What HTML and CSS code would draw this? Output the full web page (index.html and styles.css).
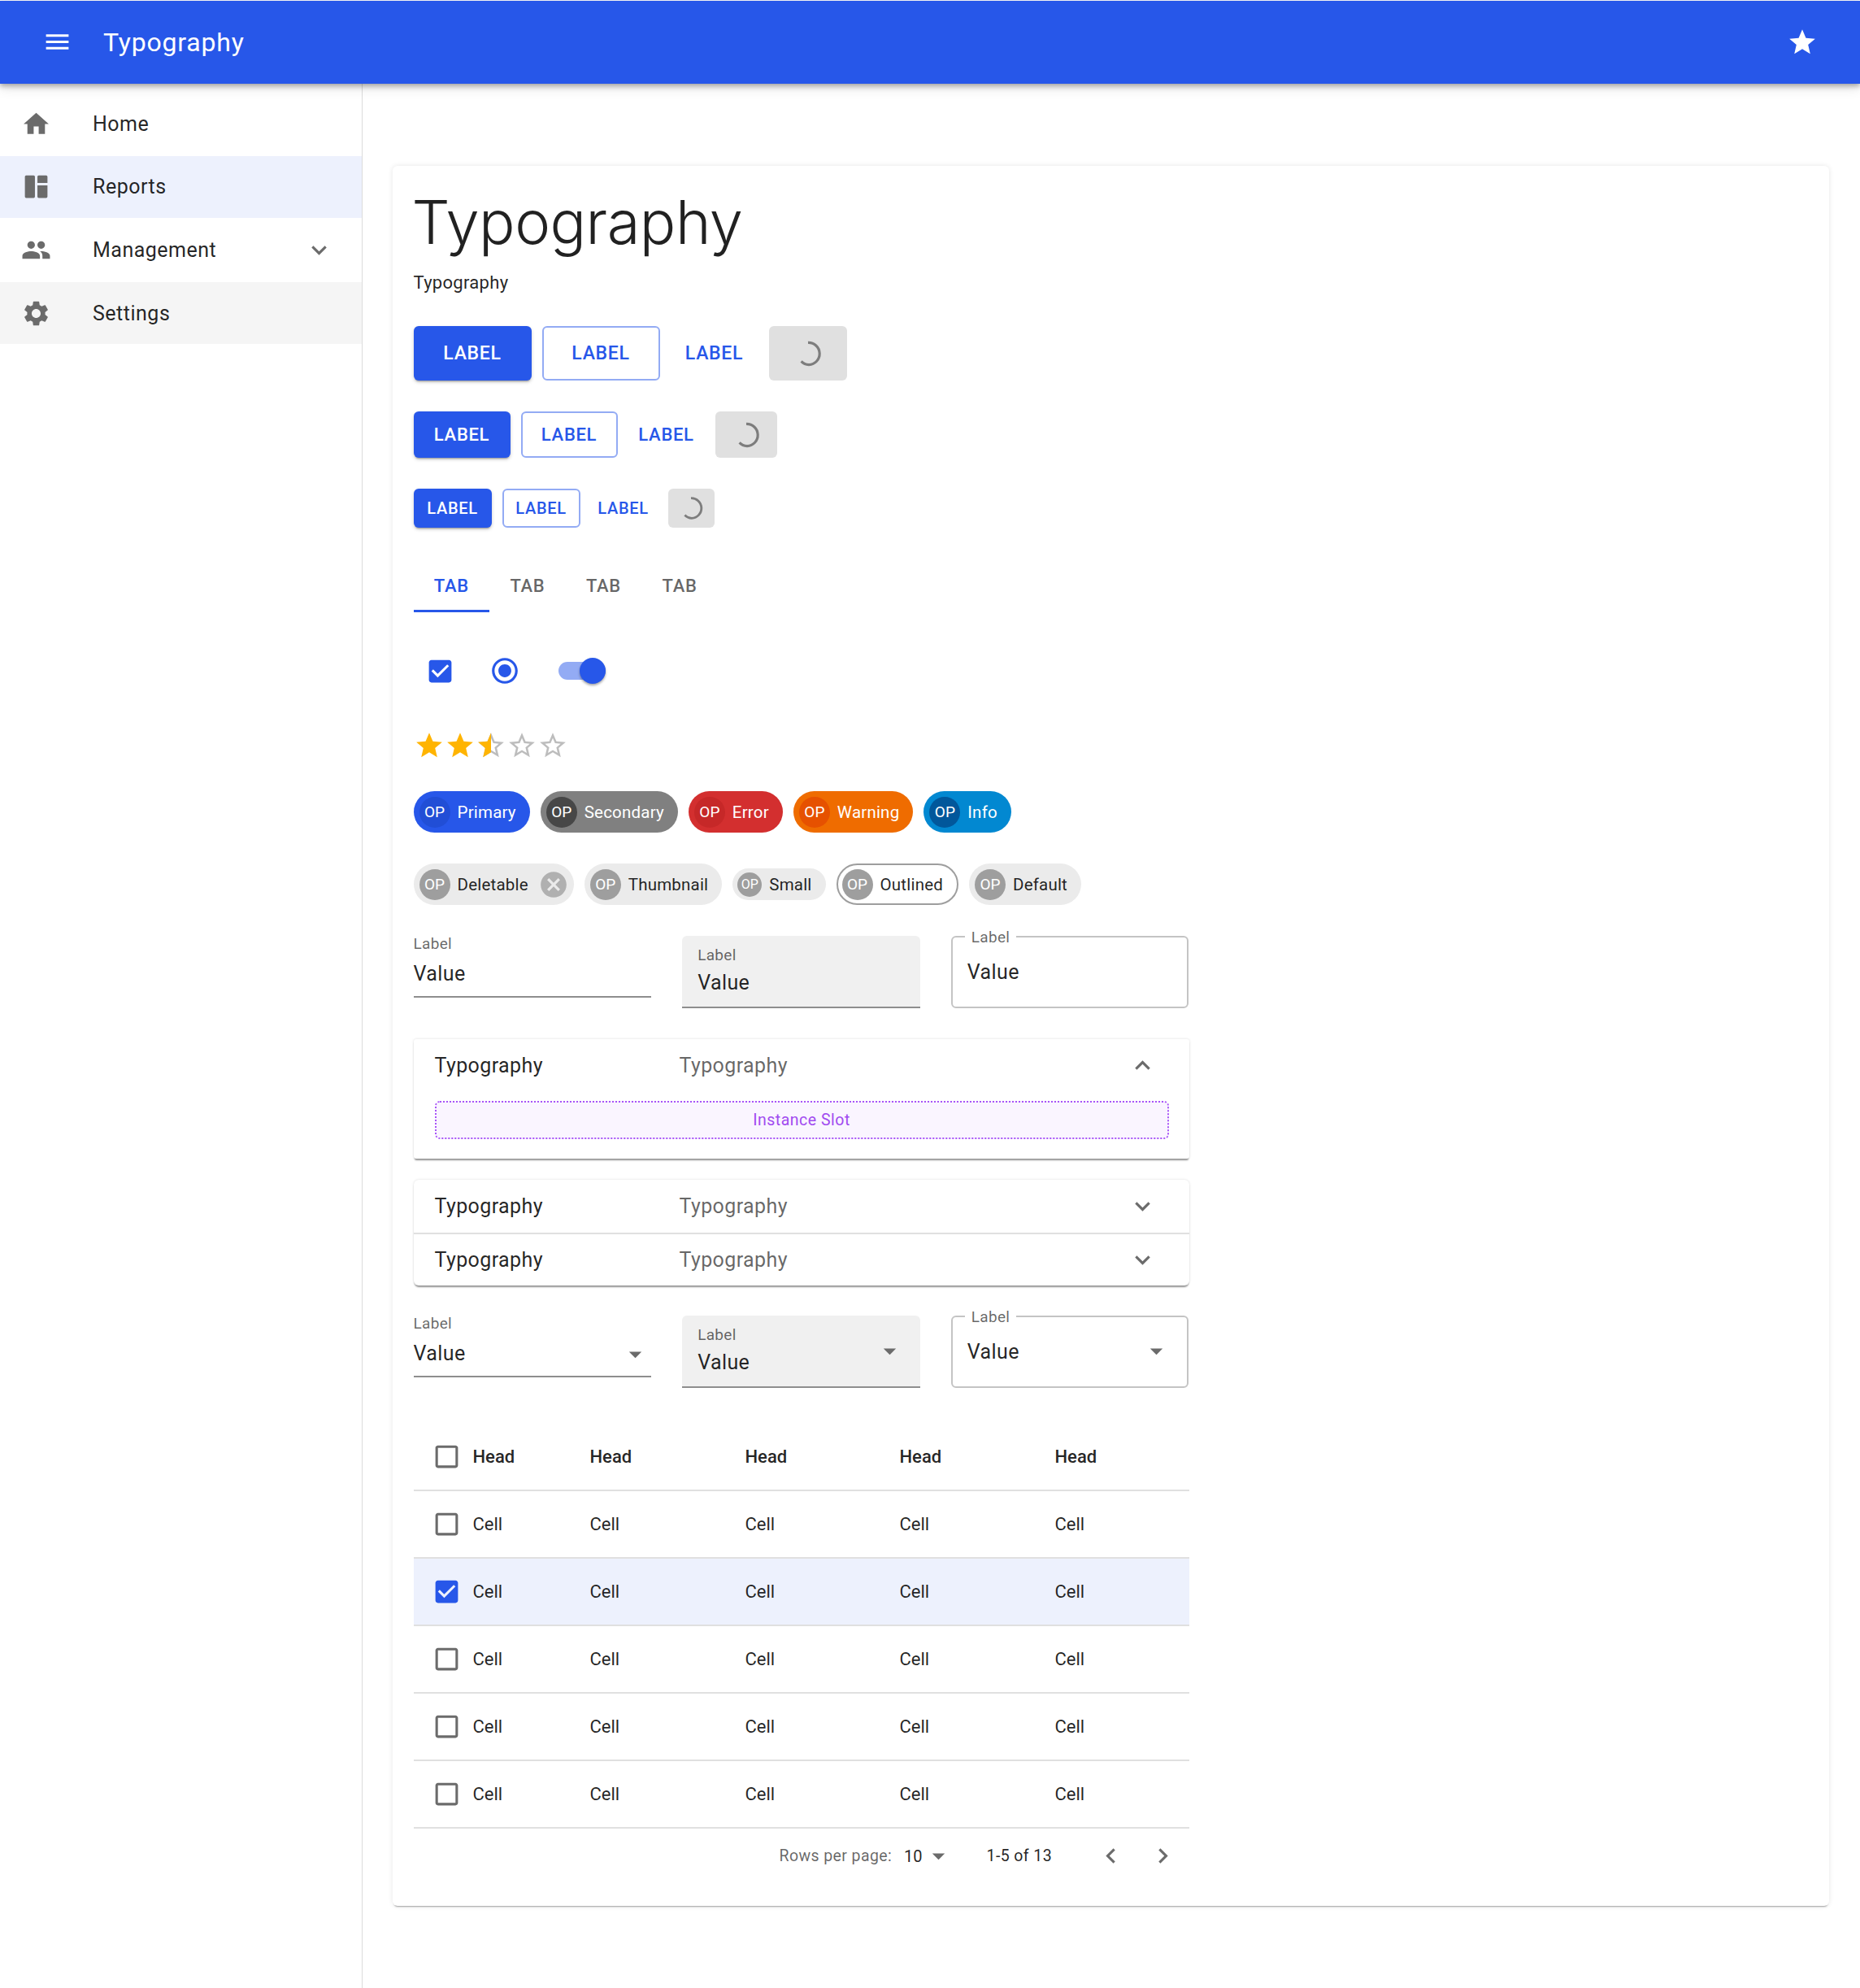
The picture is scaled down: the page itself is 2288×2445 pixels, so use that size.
FILE: index.html
```html
<!DOCTYPE html>
<html lang="en">
<head>
  <meta charset="UTF-8">
  <meta name="viewport" content="width=device-width, initial-scale=1.0">
  <title>Typography</title>
  <link rel="stylesheet" href="styles.css">
</head>
<body>
  <svg class="defs" width="0" height="0">
    <symbol id="i-menu" viewBox="0 0 24 24"><path d="M3 18h18v-2H3v2zm0-5h18v-2H3v2zm0-7v2h18V6H3z"/></symbol>
    <symbol id="i-star" viewBox="0 0 24 24"><path d="M12 17.27L18.18 21l-1.64-7.03L22 9.24l-7.19-.61L12 2 9.19 8.63 2 9.24l5.46 4.73L5.82 21z"/></symbol>
    <symbol id="i-star-o" viewBox="0 0 24 24"><path d="M22 9.24l-7.19-.62L12 2 9.19 8.63 2 9.24l5.46 4.73L5.82 21 12 17.27 18.18 21l-1.63-7.03L22 9.24zM12 15.4l-3.76 2.27 1-4.28-3.32-2.88 4.38-.38L12 6.1l1.71 4.04 4.38.38-3.32 2.88 1 4.28L12 15.4z"/></symbol>
    <symbol id="i-star-half" viewBox="0 0 24 24"><path d="M12 2 9.19 8.63 2 9.24l5.46 4.73L5.82 21 12 17.27z"/></symbol>
    <symbol id="i-home" viewBox="0 0 24 24"><path d="M10 20v-6h4v6h5v-8h3L12 3 2 12h3v8z"/></symbol>
    <symbol id="i-reports" viewBox="0 0 24 24"><path d="M4 3h6a1 1 0 0 1 1 1v16a1 1 0 0 1-1 1H4a1 1 0 0 1-1-1V4a1 1 0 0 1 1-1zm10 0h6a1 1 0 0 1 1 1v5h-8V4a1 1 0 0 1 1-1zm-1 8h8v9a1 1 0 0 1-1 1h-6a1 1 0 0 1-1-1z"/></symbol>
    <symbol id="i-people" viewBox="0 0 24 24"><path d="M16 11c1.66 0 2.99-1.34 2.99-3S17.66 5 16 5c-1.66 0-3 1.34-3 3s1.34 3 3 3zm-8 0c1.66 0 2.99-1.34 2.99-3S9.66 5 8 5C6.34 5 5 6.34 5 8s1.34 3 3 3zm0 2c-2.33 0-7 1.17-7 3.5V19h14v-2.5c0-2.33-4.67-3.5-7-3.5zm8 0c-.29 0-.62.02-.97.05 1.16.84 1.97 1.97 1.97 3.45V19h6v-2.5c0-2.33-4.67-3.5-7-3.5z"/></symbol>
    <symbol id="i-gear" viewBox="0 0 24 24"><path d="M19.14 12.94c.04-.3.06-.61.06-.94 0-.32-.02-.64-.07-.94l2.03-1.58c.18-.14.23-.41.12-.61l-1.92-3.32c-.12-.22-.37-.29-.59-.22l-2.39.96c-.5-.38-1.03-.7-1.62-.94l-.36-2.54c-.04-.24-.24-.41-.48-.41h-3.84c-.24 0-.43.17-.47.41l-.36 2.54c-.59.24-1.13.57-1.62.94l-2.39-.96c-.22-.08-.47 0-.59.22L2.74 8.87c-.12.21-.08.47.12.61l2.03 1.58c-.05.3-.09.63-.09.94s.02.64.07.94l-2.03 1.58c-.18.14-.23.41-.12.61l1.92 3.32c.12.22.37.29.59.22l2.39-.96c.5.38 1.03.7 1.62.94l.36 2.54c.05.24.24.41.48.41h3.84c.24 0 .44-.17.47-.41l.36-2.54c.59-.24 1.13-.56 1.62-.94l2.39.96c.22.08.47 0 .59-.22l1.92-3.32c.12-.22.07-.47-.12-.61l-2.01-1.58zM12 15.6c-1.98 0-3.6-1.62-3.6-3.6s1.62-3.6 3.6-3.6 3.6 1.62 3.6 3.6-1.62 3.6-3.6 3.6z"/></symbol>
    <symbol id="i-more" viewBox="0 0 24 24"><path d="M16.59 8.59L12 13.17 7.41 8.59 6 10l6 6 6-6z"/></symbol>
    <symbol id="i-less" viewBox="0 0 24 24"><path d="M12 8l-6 6 1.41 1.41L12 10.83l4.59 4.58L18 14z"/></symbol>
    <symbol id="i-checked" viewBox="0 0 24 24"><path d="M19 3H5c-1.11 0-2 .9-2 2v14c0 1.1.89 2 2 2h14c1.11 0 2-.9 2-2V5c0-1.1-.89-2-2-2zm-9 14l-5-5 1.41-1.41L10 14.17l7.59-7.59L19 8l-9 9z"/></symbol>
    <symbol id="i-unchecked" viewBox="0 0 24 24"><path d="M19 5v14H5V5h14m0-2H5c-1.1 0-2 .9-2 2v14c0 1.1.9 2 2 2h14c1.1 0 2-.9 2-2V5c0-1.1-.9-2-2-2z"/></symbol>
    <symbol id="i-radio" viewBox="0 0 24 24"><path d="M12 7c-2.76 0-5 2.24-5 5s2.24 5 5 5 5-2.24 5-5-2.24-5-5-5zm0-5C6.48 2 2 6.48 2 12s4.48 10 10 10 10-4.48 10-10S17.52 2 12 2zm0 18c-4.42 0-8-3.58-8-8s3.58-8 8-8 8 3.58 8 8-3.58 8-8 8z"/></symbol>
    <symbol id="i-cancel" viewBox="0 0 24 24"><path d="M12 2C6.47 2 2 6.47 2 12s4.47 10 10 10 10-4.47 10-10S17.53 2 12 2zm5 13.59L15.59 17 12 13.41 8.41 17 7 15.59 10.59 12 7 8.41 8.41 7 12 10.59 15.59 7 17 8.41 13.41 12 17 15.59z"/></symbol>
    <symbol id="i-drop" viewBox="0 0 24 24"><path d="M7 10l5 5 5-5z"/></symbol>
    <symbol id="i-left" viewBox="0 0 24 24"><path d="M15.41 7.41L14 6l-6 6 6 6 1.41-1.41L10.83 12z"/></symbol>
    <symbol id="i-right" viewBox="0 0 24 24"><path d="M10 6L8.59 7.41 13.17 12l-4.58 4.59L10 18l6-6z"/></symbol>
    <symbol id="i-spinner" viewBox="0 0 40 40"><path d="M20 7a13 13 0 0 1 1 26 13 13 0 0 1-9-4" fill="none" stroke="currentColor" stroke-width="3"/></symbol>
  </svg>

  <header class="appbar">
    <svg class="appbar-menu"><use href="#i-menu"/></svg>
    <div class="appbar-title">Typography</div>
    <svg class="appbar-star"><use href="#i-star"/></svg>
  </header>

  <div class="layout">
    <nav class="sidebar">
      <a class="nav-item nav-home"><svg class="nav-icon"><use href="#i-home"/></svg><span>Home</span></a>
      <a class="nav-item nav-reports"><svg class="nav-icon"><use href="#i-reports"/></svg><span>Reports</span></a>
      <a class="nav-item nav-mgmt"><svg class="nav-icon"><use href="#i-people"/></svg><span>Management</span><svg class="nav-caret"><use href="#i-more"/></svg></a>
      <a class="nav-item nav-settings"><svg class="nav-icon"><use href="#i-gear"/></svg><span>Settings</span></a>
    </nav>

    <main class="main">
      <section class="card">
        <h1 class="card-title">Typography</h1>
        <p class="card-sub">Typography</p>

        <div class="btn-row btn-row-lg">
          <button class="btn btn-contained">LABEL</button>
          <button class="btn btn-outlined">LABEL</button>
          <button class="btn btn-text">LABEL</button>
          <button class="btn btn-loading"><svg class="spinner"><use href="#i-spinner"/></svg></button>
        </div>
        <div class="btn-row btn-row-md">
          <button class="btn btn-contained">LABEL</button>
          <button class="btn btn-outlined">LABEL</button>
          <button class="btn btn-text">LABEL</button>
          <button class="btn btn-loading"><svg class="spinner"><use href="#i-spinner"/></svg></button>
        </div>
        <div class="btn-row btn-row-sm">
          <button class="btn btn-contained">LABEL</button>
          <button class="btn btn-outlined">LABEL</button>
          <button class="btn btn-text">LABEL</button>
          <button class="btn btn-loading"><svg class="spinner"><use href="#i-spinner"/></svg></button>
        </div>

        <div class="tabs">
          <div class="tab tab-active">TAB</div>
          <div class="tab">TAB</div>
          <div class="tab">TAB</div>
          <div class="tab">TAB</div>
        </div>

        <div class="controls">
          <svg class="ctl-check"><use href="#i-checked"/></svg>
          <svg class="ctl-radio"><use href="#i-radio"/></svg>
          <div class="ctl-switch"><div class="ctl-switch-thumb"></div></div>
        </div>

        <div class="rating">
          <svg class="star star-on"><use href="#i-star"/></svg>
          <svg class="star star-on"><use href="#i-star"/></svg>
          <div class="star-half">
            <svg class="star star-off"><use href="#i-star-o"/></svg>
            <svg class="star star-on star-over"><use href="#i-star-half"/></svg>
          </div>
          <svg class="star star-off"><use href="#i-star-o"/></svg>
          <svg class="star star-off"><use href="#i-star-o"/></svg>
        </div>

        <div class="chips chips-color">
          <div class="chip chip-primary"><span class="chip-av">OP</span><span>Primary</span></div>
          <div class="chip chip-secondary"><span class="chip-av">OP</span><span>Secondary</span></div>
          <div class="chip chip-error"><span class="chip-av">OP</span><span>Error</span></div>
          <div class="chip chip-warning"><span class="chip-av">OP</span><span>Warning</span></div>
          <div class="chip chip-info"><span class="chip-av">OP</span><span>Info</span></div>
        </div>

        <div class="chips chips-plain">
          <div class="chip chip-del"><span class="chip-av">OP</span><span>Deletable</span><svg class="chip-x"><use href="#i-cancel"/></svg></div>
          <div class="chip"><span class="chip-av">OP</span><span>Thumbnail</span></div>
          <div class="chip chip-small"><span class="chip-av">OP</span><span>Small</span></div>
          <div class="chip chip-outlined"><span class="chip-av">OP</span><span>Outlined</span></div>
          <div class="chip"><span class="chip-av">OP</span><span>Default</span></div>
        </div>

        <div class="fields">
          <div class="field field-standard">
            <div class="field-label">Label</div>
            <div class="field-value">Value</div>
          </div>
          <div class="field field-filled">
            <div class="field-label">Label</div>
            <div class="field-value">Value</div>
          </div>
          <div class="field field-outlined">
            <div class="field-label">Label</div>
            <div class="field-value">Value</div>
          </div>
        </div>

        <div class="accordion accordion-open">
          <div class="acc-row">
            <span class="acc-title">Typography</span>
            <span class="acc-sub">Typography</span>
            <svg class="acc-icon"><use href="#i-less"/></svg>
          </div>
          <div class="acc-slot">Instance Slot</div>
        </div>

        <div class="accordion accordion-pair">
          <div class="acc-row">
            <span class="acc-title">Typography</span>
            <span class="acc-sub">Typography</span>
            <svg class="acc-icon"><use href="#i-more"/></svg>
          </div>
          <div class="acc-row">
            <span class="acc-title">Typography</span>
            <span class="acc-sub">Typography</span>
            <svg class="acc-icon"><use href="#i-more"/></svg>
          </div>
        </div>

        <div class="fields fields-select">
          <div class="field field-standard">
            <div class="field-label">Label</div>
            <div class="field-value">Value</div>
            <svg class="field-drop"><use href="#i-drop"/></svg>
          </div>
          <div class="field field-filled">
            <div class="field-label">Label</div>
            <div class="field-value">Value</div>
            <svg class="field-drop"><use href="#i-drop"/></svg>
          </div>
          <div class="field field-outlined">
            <div class="field-label">Label</div>
            <div class="field-value">Value</div>
            <svg class="field-drop"><use href="#i-drop"/></svg>
          </div>
        </div>

        <div class="table">
          <div class="tr tr-head">
            <svg class="tcheck"><use href="#i-unchecked"/></svg>
            <span>Head</span><span>Head</span><span>Head</span><span>Head</span><span>Head</span>
          </div>
          <div class="tr">
            <svg class="tcheck"><use href="#i-unchecked"/></svg>
            <span>Cell</span><span>Cell</span><span>Cell</span><span>Cell</span><span>Cell</span>
          </div>
          <div class="tr tr-selected">
            <svg class="tcheck tcheck-on"><use href="#i-checked"/></svg>
            <span>Cell</span><span>Cell</span><span>Cell</span><span>Cell</span><span>Cell</span>
          </div>
          <div class="tr">
            <svg class="tcheck"><use href="#i-unchecked"/></svg>
            <span>Cell</span><span>Cell</span><span>Cell</span><span>Cell</span><span>Cell</span>
          </div>
          <div class="tr">
            <svg class="tcheck"><use href="#i-unchecked"/></svg>
            <span>Cell</span><span>Cell</span><span>Cell</span><span>Cell</span><span>Cell</span>
          </div>
          <div class="tr">
            <svg class="tcheck"><use href="#i-unchecked"/></svg>
            <span>Cell</span><span>Cell</span><span>Cell</span><span>Cell</span><span>Cell</span>
          </div>
        </div>

        <div class="pager">
          <span class="pager-label">Rows per page:</span>
          <span class="pager-size">10</span>
          <svg class="pager-drop"><use href="#i-drop"/></svg>
          <span class="pager-range">1-5 of 13</span>
          <svg class="pager-nav pager-prev"><use href="#i-left"/></svg>
          <svg class="pager-nav pager-next"><use href="#i-right"/></svg>
        </div>
      </section>
    </main>
  </div>
</body>
</html>
```

FILE: styles.css
```css
* {
  box-sizing: border-box;
}

html,
body {
  margin: 0;
  padding: 0;
}

body {
  width: 2288px;
  height: 2445px;
  overflow: hidden;
  background-color: #fff;
  color: rgba(0, 0, 0, 0.87);
  font-family: Roboto, "Liberation Sans", sans-serif;
  font-size: 22px;
}

svg {
  display: block;
  fill: currentColor;
  flex: none;
}

.defs {
  position: absolute;
}

/* app bar */
.appbar {
  position: relative;
  z-index: 2;
  display: flex;
  align-items: center;
  height: 102px;
  margin-top: 1px;
  padding: 0 52px 0 52px;
  background-color: #2757e9;
  color: #fff;
  box-shadow: 0 3px 6px rgba(0, 0, 0, 0.3), 0 6px 14px rgba(0, 0, 0, 0.1);
}

.appbar-menu {
  width: 37px;
  height: 37px;
  margin-top: -1px;
}

.appbar-title {
  margin-left: 38px;
  font-size: 32px;
  letter-spacing: 0.8px;
}

.appbar-star {
  width: 38px;
  height: 38px;
  margin-left: auto;
}

.layout {
  display: flex;
  height: 2342px;
}

/* sidebar */
.sidebar {
  width: 446px;
  flex: none;
  border-right: 1px solid #dcdcdc;
}

.nav-item {
  display: flex;
  align-items: center;
  padding-left: 26px;
  font-size: 25px;
  letter-spacing: 0.5px;
  color: rgba(0, 0, 0, 0.87);
}

.nav-home {
  height: 89px;
  padding-top: 10px;
}

.nav-reports {
  height: 76px;
  padding-bottom: 2px;
  background-color: #edf1fd;
}

.nav-mgmt {
  height: 79px;
}

.nav-settings {
  height: 76px;
  background-color: #f5f5f5;
}

.nav-icon {
  width: 37px;
  height: 37px;
  color: #6b6b6b;
  margin-right: 51px;
}

.nav-caret {
  width: 37px;
  height: 37px;
  margin-left: auto;
  margin-right: 34px;
  color: #6b6b6b;
}

/* card */
.main {
  flex: 1;
  padding: 101px 38px 0 37px;
}

.card {
  height: 2140px;
  padding: 0 25.5px;
  border-radius: 6px;
  background-color: #fff;
  box-shadow: 0 3px 2px -2px rgba(0, 0, 0, 0.35), 0 0 6px rgba(0, 0, 0, 0.1);
}

.card-title {
  margin: 0 0 0 -2px;
  padding-top: 25px;
  font-family: Inter, Roboto, sans-serif;
  font-size: 74px;
  font-weight: 300;
  line-height: 88px;
  letter-spacing: -0.5px;
  color: rgba(0, 0, 0, 0.87);
}

.card-sub {
  margin: 14px 0 0;
  font-size: 22px;
  line-height: 34px;
  letter-spacing: 0.3px;
}

/* buttons */
.btn-row {
  display: flex;
  align-items: stretch;
  gap: 13px;
}

.btn {
  display: flex;
  align-items: center;
  justify-content: center;
  padding: 0;
  border: none;
  border-radius: 6px;
  background: none;
  font-family: inherit;
  font-weight: 500;
  letter-spacing: 0.7px;
  color: #2757e9;
}

.btn-contained {
  background-color: #2757e9;
  color: #fff;
  box-shadow: 0 3px 2px -2px rgba(0, 0, 0, 0.3), 0 2px 4px rgba(0, 0, 0, 0.2);
}

.btn-outlined {
  border: 2px solid #93abf4;
}

.btn-loading {
  background-color: #e0e0e0;
  color: #7d7d7d;
}

.btn-row-lg {
  height: 67px;
  margin-top: 36px;
}

.btn-row-lg .btn {
  font-size: 23px;
  width: 145px;
}

.btn-row-lg .btn-text {
  width: 108px;
}

.btn-row-lg .btn-loading {
  width: 96px;
}

.btn-row-md {
  height: 57px;
  margin-top: 38px;
}

.btn-row-md .btn {
  font-size: 22px;
  width: 119px;
}

.btn-row-md .btn-text {
  width: 94px;
}

.btn-row-md .btn-loading {
  width: 76px;
}

.btn-row-sm {
  height: 48px;
  margin-top: 38px;
}

.btn-row-sm .btn {
  font-size: 20px;
  width: 96px;
}

.btn-row-sm .btn-text {
  width: 90px;
  margin-left: -5px;
  margin-right: -3px;
}

.btn-row-sm .btn-loading {
  width: 57px;
}

.spinner {
  width: 42px;
  height: 42px;
}

.btn-row-sm .spinner {
  width: 38px;
  height: 38px;
}

/* tabs */
.tabs {
  display: flex;
  margin-top: 41px;
  height: 63px;
}

.tab {
  display: flex;
  align-items: center;
  justify-content: center;
  width: 93.6px;
  padding-top: 1px;
  border-bottom: 3px solid transparent;
  font-size: 22px;
  font-weight: 500;
  letter-spacing: 0.7px;
  color: rgba(0, 0, 0, 0.6);
}

.tab-active {
  color: #2757e9;
  border-bottom-color: #2757e9;
}

/* selection controls */
.controls {
  display: flex;
  align-items: center;
  margin-top: 56px;
  height: 32px;
  color: #2757e9;
}

.ctl-check {
  width: 37px;
  height: 37px;
  margin-left: 14px;
}

.ctl-radio {
  width: 38px;
  height: 38px;
  margin-left: 42px;
}

.ctl-switch {
  position: relative;
  width: 58px;
  height: 22px;
  margin-left: 47px;
  border-radius: 11px;
  background-color: #93abf4;
}

.ctl-switch-thumb {
  position: absolute;
  top: -5px;
  right: 0;
  width: 32px;
  height: 32px;
  border-radius: 50%;
  background-color: #2757e9;
  box-shadow: 0 2px 3px rgba(0, 0, 0, 0.35);
}

/* rating */
.rating {
  display: flex;
  align-items: center;
  margin-top: 57px;
  height: 38px;
}

.star {
  width: 38px;
  height: 38px;
}

.star-on {
  color: #ffb400;
}

.star-off {
  color: #bdbdbd;
}

.star-half {
  position: relative;
  width: 38px;
  height: 38px;
}

.star-over {
  position: absolute;
  top: 0;
  left: 0;
}

/* chips */
.chips {
  display: flex;
  align-items: center;
  gap: 13px;
  height: 51px;
}

.chips-color {
  margin-top: 37px;
}

.chips-plain {
  margin-top: 38px;
}

.chip {
  display: flex;
  align-items: center;
  height: 51px;
  padding: 0 17px 0 7px;
  border-radius: 26px;
  background-color: #ebebeb;
  font-size: 20.5px;
  letter-spacing: 0.2px;
}

.chip-av {
  display: flex;
  align-items: center;
  justify-content: center;
  width: 38px;
  height: 38px;
  margin-right: 9px;
  border-radius: 50%;
  background-color: #9e9e9e;
  color: #fff;
  font-size: 19px;
  letter-spacing: 0;
}

.chip-primary {
  background-color: #2757e9;
  color: #fff;
}

.chip-primary .chip-av {
  background-color: #214ed6;
}

.chip-secondary {
  background-color: #808080;
  color: #fff;
}

.chip-secondary .chip-av {
  background-color: #474747;
}

.chip-error {
  background-color: #d32f2f;
  color: #fff;
}

.chip-error .chip-av {
  background-color: #c62828;
}

.chip-warning {
  background-color: #ef6c00;
  color: #fff;
}

.chip-warning .chip-av {
  background-color: #e65100;
}

.chip-info {
  background-color: #0288d1;
  color: #fff;
}

.chip-info .chip-av {
  background-color: #01579b;
}

.chip-del {
  padding-right: 6px;
}

.chip-x {
  width: 38px;
  height: 38px;
  margin-left: 12px;
  color: #b0b0b0;
}

.chip-small {
  height: 39px;
  padding-left: 6px;
}

.chip-small .chip-av {
  width: 30px;
  height: 30px;
  font-size: 16px;
  margin-right: 9px;
}

.chip-outlined {
  padding-left: 5px;
  background-color: #fff;
  border: 2px solid #9e9e9e;
}

/* text fields and selects */
.fields {
  display: grid;
  grid-template-columns: repeat(3, 1fr);
  gap: 38px;
  width: 954px;
  margin-top: 38px;
  height: 89px;
}

.fields-select {
  margin-top: 37px;
}

.field {
  position: relative;
  height: 89px;
}

.field-label {
  font-size: 19px;
  color: rgba(0, 0, 0, 0.6);
  line-height: 24px;
  letter-spacing: 0.3px;
}

.field-value {
  font-size: 25px;
  line-height: 30px;
  letter-spacing: 0.4px;
}

.field-standard {
  height: 76px;
  border-bottom: 2px solid #8e8e8e;
}

.field-standard .field-label {
  margin-top: -2px;
}

.field-standard .field-value {
  margin-top: 10px;
}

.field-filled {
  padding: 12px 19px 0;
  background-color: #f0f0f0;
  border-radius: 6px 6px 0 0;
  border-bottom: 2px solid #8e8e8e;
}

.field-filled .field-value {
  margin-top: 7px;
}

.field-outlined {
  padding: 28px 18px 0;
  border: 2px solid #c4c4c4;
  border-radius: 6px;
}

.field-outlined .field-label {
  position: absolute;
  top: -12px;
  left: 15px;
  padding: 0 8px;
  background-color: #fff;
}

.field-drop {
  position: absolute;
  width: 37px;
  height: 37px;
  color: #6b6b6b;
}

.field-standard .field-drop {
  top: 29px;
  right: 1px;
}

.field-filled .field-drop {
  top: 25px;
  right: 19px;
}

.field-outlined .field-drop {
  top: 23px;
  right: 19px;
}

/* accordions */
.accordion {
  width: 954px;
  border-radius: 3px;
  background-color: #fff;
  box-shadow: 0 3px 2px -1px rgba(0, 0, 0, 0.4), 0 0 3px rgba(0, 0, 0, 0.15);
}

.accordion-open {
  height: 147px;
  margin-top: 38px;
}

.accordion-pair {
  height: 130px;
  margin-top: 26px;
  border-radius: 6px;
}

.acc-row {
  display: flex;
  align-items: center;
  height: 65px;
  padding: 0 39px 0 26px;
  font-size: 25px;
  letter-spacing: 0.4px;
}

.accordion-open .acc-row {
  height: 64px;
}

.accordion-pair .acc-row + .acc-row {
  border-top: 2px solid #e0e0e0;
}

.acc-title {
  width: 301px;
}

.acc-sub {
  color: rgba(0, 0, 0, 0.6);
}

.acc-icon {
  width: 37px;
  height: 37px;
  margin-left: auto;
  color: #6b6b6b;
}

.acc-slot {
  display: flex;
  align-items: center;
  justify-content: center;
  height: 47px;
  margin: 12px 25px 0 26px;
  border: 2px dotted #a855f7;
  border-radius: 6px;
  background-color: #faf5ff;
  color: #a14bf0;
  font-size: 19.5px;
  letter-spacing: 0.5px;
}

/* table */
.table {
  width: 954px;
  margin-top: 45px;
}

.tr {
  display: grid;
  grid-template-columns: 47px 144px 191px 190px 191px 1fr;
  align-items: center;
  height: 83px;
  padding-left: 26px;
  border-bottom: 2px solid #e0e0e0;
  font-size: 22px;
}

.tr-head {
  height: 81.5px;
  font-weight: 500;
}

.tr-selected {
  background-color: #edf1fd;
}

.tcheck {
  width: 37px;
  height: 37px;
  margin-left: -4px;
  color: #6b6b6b;
}

.tcheck-on {
  color: #2757e9;
}

/* pagination */
.pager {
  display: flex;
  align-items: center;
  width: 954px;
  height: 67px;
  font-size: 19.5px;
}

.pager-label {
  margin-left: 450px;
  color: rgba(0, 0, 0, 0.6);
  letter-spacing: 0.4px;
}

.pager-size {
  margin-left: 15px;
  font-size: 20px;
  padding-top: 2px;
}

.pager-drop {
  width: 37px;
  height: 37px;
  color: #6b6b6b;
  margin-left: 1px;
}

.pager-range {
  margin-left: 41px;
  letter-spacing: 0.4px;
}

.pager-nav {
  width: 37px;
  height: 37px;
  color: #6b6b6b;
}

.pager-prev {
  margin-left: 54px;
}

.pager-next {
  margin-left: 27px;
}
```
